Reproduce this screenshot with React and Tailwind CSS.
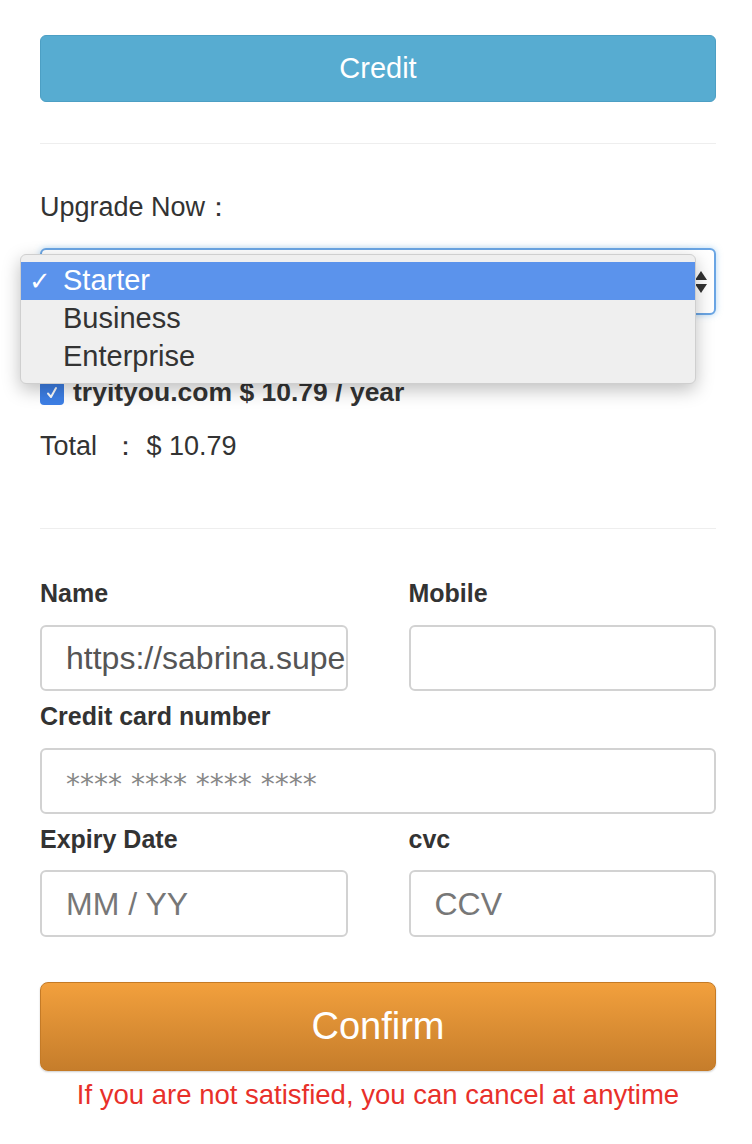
import React from "react";

export default function App() {
  const font = { fontFamily: '"Liberation Sans", Arial, sans-serif' };
  return (
    <div className="w-[752px] min-h-[1144px] bg-white text-[#333]" style={font}>
      <div className="mx-[40px] w-[676px] pt-[35px] pb-[40px]">
        <button className="w-full h-[67px] rounded-[6px] bg-[#57acd1] border border-[#4c9fc4] text-white text-[29px] flex items-center justify-center">
          Credit
        </button>
        <div className="mt-[41px] h-px bg-[#eeeeee]" />
        <div className="mt-[46px] h-[34px] leading-[34px] text-[27px] text-[#333]">Upgrade Now：</div>

        <div className="relative mt-[24px]">
          <div className="h-[67px] rounded-[6px] border-2 border-[#6aa5e4] shadow-[0_0_6px_rgba(102,175,233,0.5)] bg-white flex items-center justify-end pr-[6px]">
            <svg width="14" height="26" viewBox="0 0 14 26">
              <path d="M7 2 L13 11 L1 11 Z" fill="#333" />
              <path d="M7 24 L13 15 L1 15 Z" fill="#333" />
            </svg>
          </div>
          <div className="absolute left-[-20px] top-[6px] w-[676px] h-[130px] rounded-[6px] bg-[#efefef] border border-[#cfcfcf] shadow-[0_6px_18px_rgba(0,0,0,0.25)] pt-[7px]">
            <div className="h-[38px] bg-[#5b93ec] flex items-center text-white text-[29px]">
              <span className="w-[42px] pl-[8px] text-[26px]">✓</span>
              <span>Starter</span>
            </div>
            <div className="h-[38px] flex items-center text-[#333] text-[29px]">
              <span className="w-[42px]" />
              <span>Business</span>
            </div>
            <div className="h-[38px] flex items-center text-[#333] text-[29px]">
              <span className="w-[42px]" />
              <span>Enterprise</span>
            </div>
          </div>
        </div>

        <div className="mt-[61px] h-[34px] flex items-center gap-[9px]">
          <span className="w-[24px] h-[24px] rounded-[4px] bg-[#3d7fe6] flex items-center justify-center">
            <svg width="16" height="16" viewBox="0 0 16 16">
              <path d="M4 8.5 L7 12 L12 3" stroke="white" strokeWidth="2" fill="none" strokeLinecap="round" strokeLinejoin="round" />
            </svg>
          </span>
          <span className="text-[26.5px] font-bold text-[#333]">tryityou.com $ 10.79 / year</span>
        </div>
        <div className="mt-[19px] h-[34px] leading-[34px] text-[27px] text-[#333]">
          Total &nbsp;：&nbsp;$ 10.79
        </div>

        <div className="mt-[65px] h-px bg-[#eeeeee]" />

        <div className="mt-[49px] grid grid-cols-2 gap-x-[61px]">
          <div>
            <div className="h-[30px] leading-[30px] text-[25px] font-bold text-[#333]">Name</div>
            <div className="mt-[17px] h-[66px] rounded-[6px] border-2 border-[#d2d2d2] flex items-center pl-[24px] overflow-hidden">
              <span className="text-[32px] text-[#555] whitespace-nowrap">https://sabrina.super</span>
            </div>
          </div>
          <div>
            <div className="h-[30px] leading-[30px] text-[25px] font-bold text-[#333]">Mobile</div>
            <div className="mt-[17px] h-[66px] rounded-[6px] border-2 border-[#d2d2d2]" />
          </div>
        </div>

        <div className="mt-[10px] h-[30px] leading-[30px] text-[25px] font-bold text-[#333]">Credit card number</div>
        <div className="mt-[17px] h-[66px] rounded-[6px] border-2 border-[#d2d2d2] flex items-center pl-[24px]">
          <span className="text-[28px] text-[#888] pt-[8px]" style={{ fontFamily: '"DejaVu Sans", sans-serif' }}>**** **** **** ****</span>
        </div>

        <div className="mt-[10px] grid grid-cols-2 gap-x-[61px]">
          <div>
            <div className="h-[30px] leading-[30px] text-[25px] font-bold text-[#333]">Expiry Date</div>
            <div className="mt-[16px] h-[67px] rounded-[6px] border-2 border-[#d2d2d2] flex items-center pl-[24px]">
              <span className="text-[32px] text-[#777]">MM / YY</span>
            </div>
          </div>
          <div>
            <div className="h-[30px] leading-[30px] text-[25px] font-bold text-[#333]">cvc</div>
            <div className="mt-[16px] h-[67px] rounded-[6px] border-2 border-[#d2d2d2] flex items-center pl-[24px]">
              <span className="text-[32px] text-[#777]">CCV</span>
            </div>
          </div>
        </div>

        <button className="mt-[45px] w-full h-[89px] rounded-[8px] border border-[#c47a26] bg-gradient-to-b from-[#f2a03d] to-[#c67d2b] text-white text-[38px] flex items-center justify-center shadow-[0_1px_2px_rgba(0,0,0,0.2)]">
          Confirm
        </button>
        <div className="mt-[9px] h-[30px] leading-[30px] text-center text-[27.5px] text-[#e8302a] whitespace-nowrap">
          If you are not satisfied, you can cancel at anytime
        </div>
      </div>
    </div>
  );
}
